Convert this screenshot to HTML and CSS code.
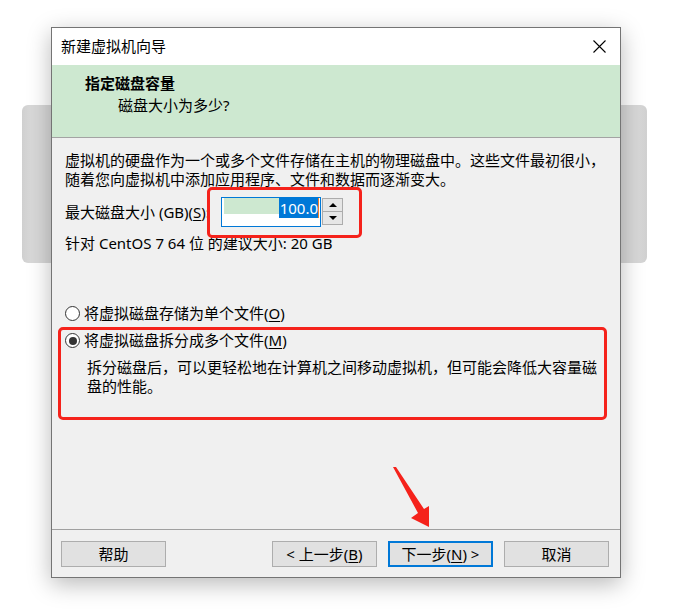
FILE: index.html
```html
<!DOCTYPE html>
<html lang="zh-CN">
<head>
<meta charset="utf-8">
<title>新建虚拟机向导</title>
<link rel="stylesheet" href="styles.css">
</head>
<body>
<div class="bgwin"></div>
<div class="dialog">
  <div class="titlebar">
    <span class="title">新建虚拟机向导</span>
    <svg class="close" width="13" height="13" viewBox="0 0 13 13"><path d="M0.5 0.5 L12.5 12.5 M12.5 0.5 L0.5 12.5" stroke="#000" stroke-width="1.1" fill="none"/></svg>
  </div>
  <div class="header">
    <div class="h-title">指定磁盘容量</div>
    <div class="h-sub">磁盘大小为多少?</div>
  </div>
  <div class="content">
    <p class="intro">虚拟机的硬盘作为一个或多个文件存储在主机的物理磁盘中。这些文件最初很小，<br>随着您向虚拟机中添加应用程序、文件和数据而逐渐变大。</p>
    <div class="size-row">
      <span class="label">最大磁盘大小 (GB)(<u>S</u>):</span>
      <div class="spin">
        <div class="field"><span class="fill"></span><span class="sel">100.0</span><span class="caret"></span></div>
        <div class="arrows">
          <span class="arr"><span class="tri-up"></span></span>
          <span class="arr"><span class="tri-down"></span></span>
        </div>
      </div>
    </div>
    <p class="hint">针对 CentOS 7 64 位 的建议大小: 20 GB</p>
    <div class="options">
      <div class="radio"><span class="circle"></span><span>将虚拟磁盘存储为单个文件(<u>O</u>)</span></div>
      <div class="radio radio-2"><span class="circle checked"></span><span>将虚拟磁盘拆分成多个文件(<u>M</u>)</span></div>
      <p class="desc">拆分磁盘后，可以更轻松地在计算机之间移动虚拟机，但可能会降低大容量磁<br>盘的性能。</p>
    </div>
  </div>
  <div class="footer">
    <button class="btn btn-help">帮助</button>
    <button class="btn">&lt; 上一步(<u>B</u>)</button>
    <button class="btn btn-next">下一步(<u>N</u>) &gt;</button>
    <button class="btn">取消</button>
  </div>
</div>
<div class="mark mark-spin"></div>
<div class="mark mark-opt"></div>
<svg class="arrow" width="686" height="615" viewBox="0 0 686 615">
  <polygon points="393,467 396,467 424,509 429,506 429,527 411,518 418,513" fill="#f5221b"/>
</svg>
</body>
</html>
```
FILE: styles.css
```css
html, body {
  margin: 0;
  padding: 0;
  background: #ffffff;
}
body {
  width: 686px;
  height: 615px;
  position: relative;
  overflow: hidden;
  font-family: "Noto Sans", "Noto Sans CJK SC", sans-serif;
  font-size: 15px;
  line-height: 19px;
  color: #000;
}
u {
  text-decoration: underline;
  text-underline-offset: 2px;
}
.bgwin {
  position: absolute;
  left: 22px;
  top: 105px;
  width: 625px;
  height: 158px;
  border-radius: 6px;
  background: linear-gradient(to right, #cfcfcf, #d8d8d8 8px, #d8d8d8 calc(100% - 8px), #d0d0d0);
}
.dialog {
  position: absolute;
  left: 51px;
  top: 27px;
  width: 570px;
  height: 551px;
  box-sizing: border-box;
  border: 1px solid #747474;
  background: #f0f0f0;
  box-shadow: 0 6px 22px rgba(0, 0, 0, 0.28);
  display: flex;
  flex-direction: column;
}
.titlebar {
  height: 37px;
  flex: none;
  background: #ffffff;
  display: flex;
  align-items: center;
  justify-content: space-between;
  padding: 0 14px 0 9px;
}
.title {
  font-size: 15px;
}
.close {
  display: block;
}
.header {
  height: 73px;
  box-sizing: border-box;
  flex: none;
  background: #cde8d0;
  border-bottom: 1px solid #a3a3a3;
  padding: 9px 0 0 33px;
}
.h-title {
  font-weight: 700;
}
.h-sub {
  margin-top: 3px;
  padding-left: 33px;
}
.content {
  flex: 1;
  padding: 13px 10px 0 13px;
}
.intro, .hint, .desc {
  margin: 0;
}
.size-row {
  margin-top: 8px;
  display: flex;
  align-items: center;
  height: 30px;
}
.label {
  width: 156px;
  flex: none;
}
.spin {
  display: flex;
  align-items: flex-start;
}
.field {
  width: 100px;
  height: 30px;
  box-sizing: border-box;
  border: 1px solid #0078d7;
  background: #ffffff;
  display: flex;
  align-items: flex-start;
  padding: 0 1px 0 2px;
}
.fill {
  flex: 1;
  height: 16px;
  background: #cde8d0;
}
.sel {
  background: #0078d7;
  color: #ffffff;
  height: 20px;
  line-height: 20px;
  padding: 0 0 0 1px;
}
.caret {
  width: 1px;
  height: 20px;
  background: #f07f2a;
}
.arrows {
  display: flex;
  flex-direction: column;
  margin-left: 1px;
  margin-top: 1px;
}
.arr {
  width: 21px;
  height: 14px;
  box-sizing: border-box;
  border: 1px solid #acacac;
  background: #e6e6e6;
  display: flex;
  align-items: center;
  justify-content: center;
}
.arr + .arr {
  border-top: none;
  height: 13px;
}
.tri-up {
  width: 0;
  height: 0;
  border-left: 4px solid transparent;
  border-right: 4px solid transparent;
  border-bottom: 4px solid #000;
}
.tri-down {
  width: 0;
  height: 0;
  border-left: 4px solid transparent;
  border-right: 4px solid transparent;
  border-top: 4px solid #000;
}
.hint {
  margin-top: 7px;
}
.options {
  margin-top: 51px;
}
.radio {
  display: flex;
  align-items: center;
  gap: 4px;
  height: 19px;
}
.radio-2 {
  margin-top: 8px;
}
.circle {
  width: 15px;
  height: 15px;
  box-sizing: border-box;
  border: 1px solid #333;
  border-radius: 50%;
  background: #fff;
  display: flex;
  align-items: center;
  justify-content: center;
}
.circle.checked::after {
  content: "";
  width: 8px;
  height: 8px;
  border-radius: 50%;
  background: #333;
}
.desc {
  margin-top: 8px;
  padding-left: 22px;
}
.footer {
  flex: none;
  border-top: 1px solid #a0a0a0;
  padding: 11px 11px 10px 9px;
  display: flex;
  gap: 11px;
}
.btn {
  width: 105px;
  height: 26px;
  box-sizing: border-box;
  border: 1px solid #adadad;
  background: #e1e1e1;
  font-family: "Noto Sans", "Noto Sans CJK SC", sans-serif;
  font-size: 15px;
  line-height: 19px;
  color: #000;
  padding: 0;
  margin: 0;
}
.btn-help {
  margin-right: auto;
}
.btn-next {
  border: 2px solid #0078d7;
}
.mark {
  position: absolute;
  box-sizing: border-box;
  border: 3px solid #f5221b;
  border-radius: 5px;
}
.mark-spin {
  left: 207px;
  top: 187px;
  width: 155px;
  height: 51px;
}
.mark-opt {
  left: 58px;
  top: 327px;
  width: 549px;
  height: 93px;
}
.arrow {
  position: absolute;
  left: 0;
  top: 0;
  pointer-events: none;
}
```
